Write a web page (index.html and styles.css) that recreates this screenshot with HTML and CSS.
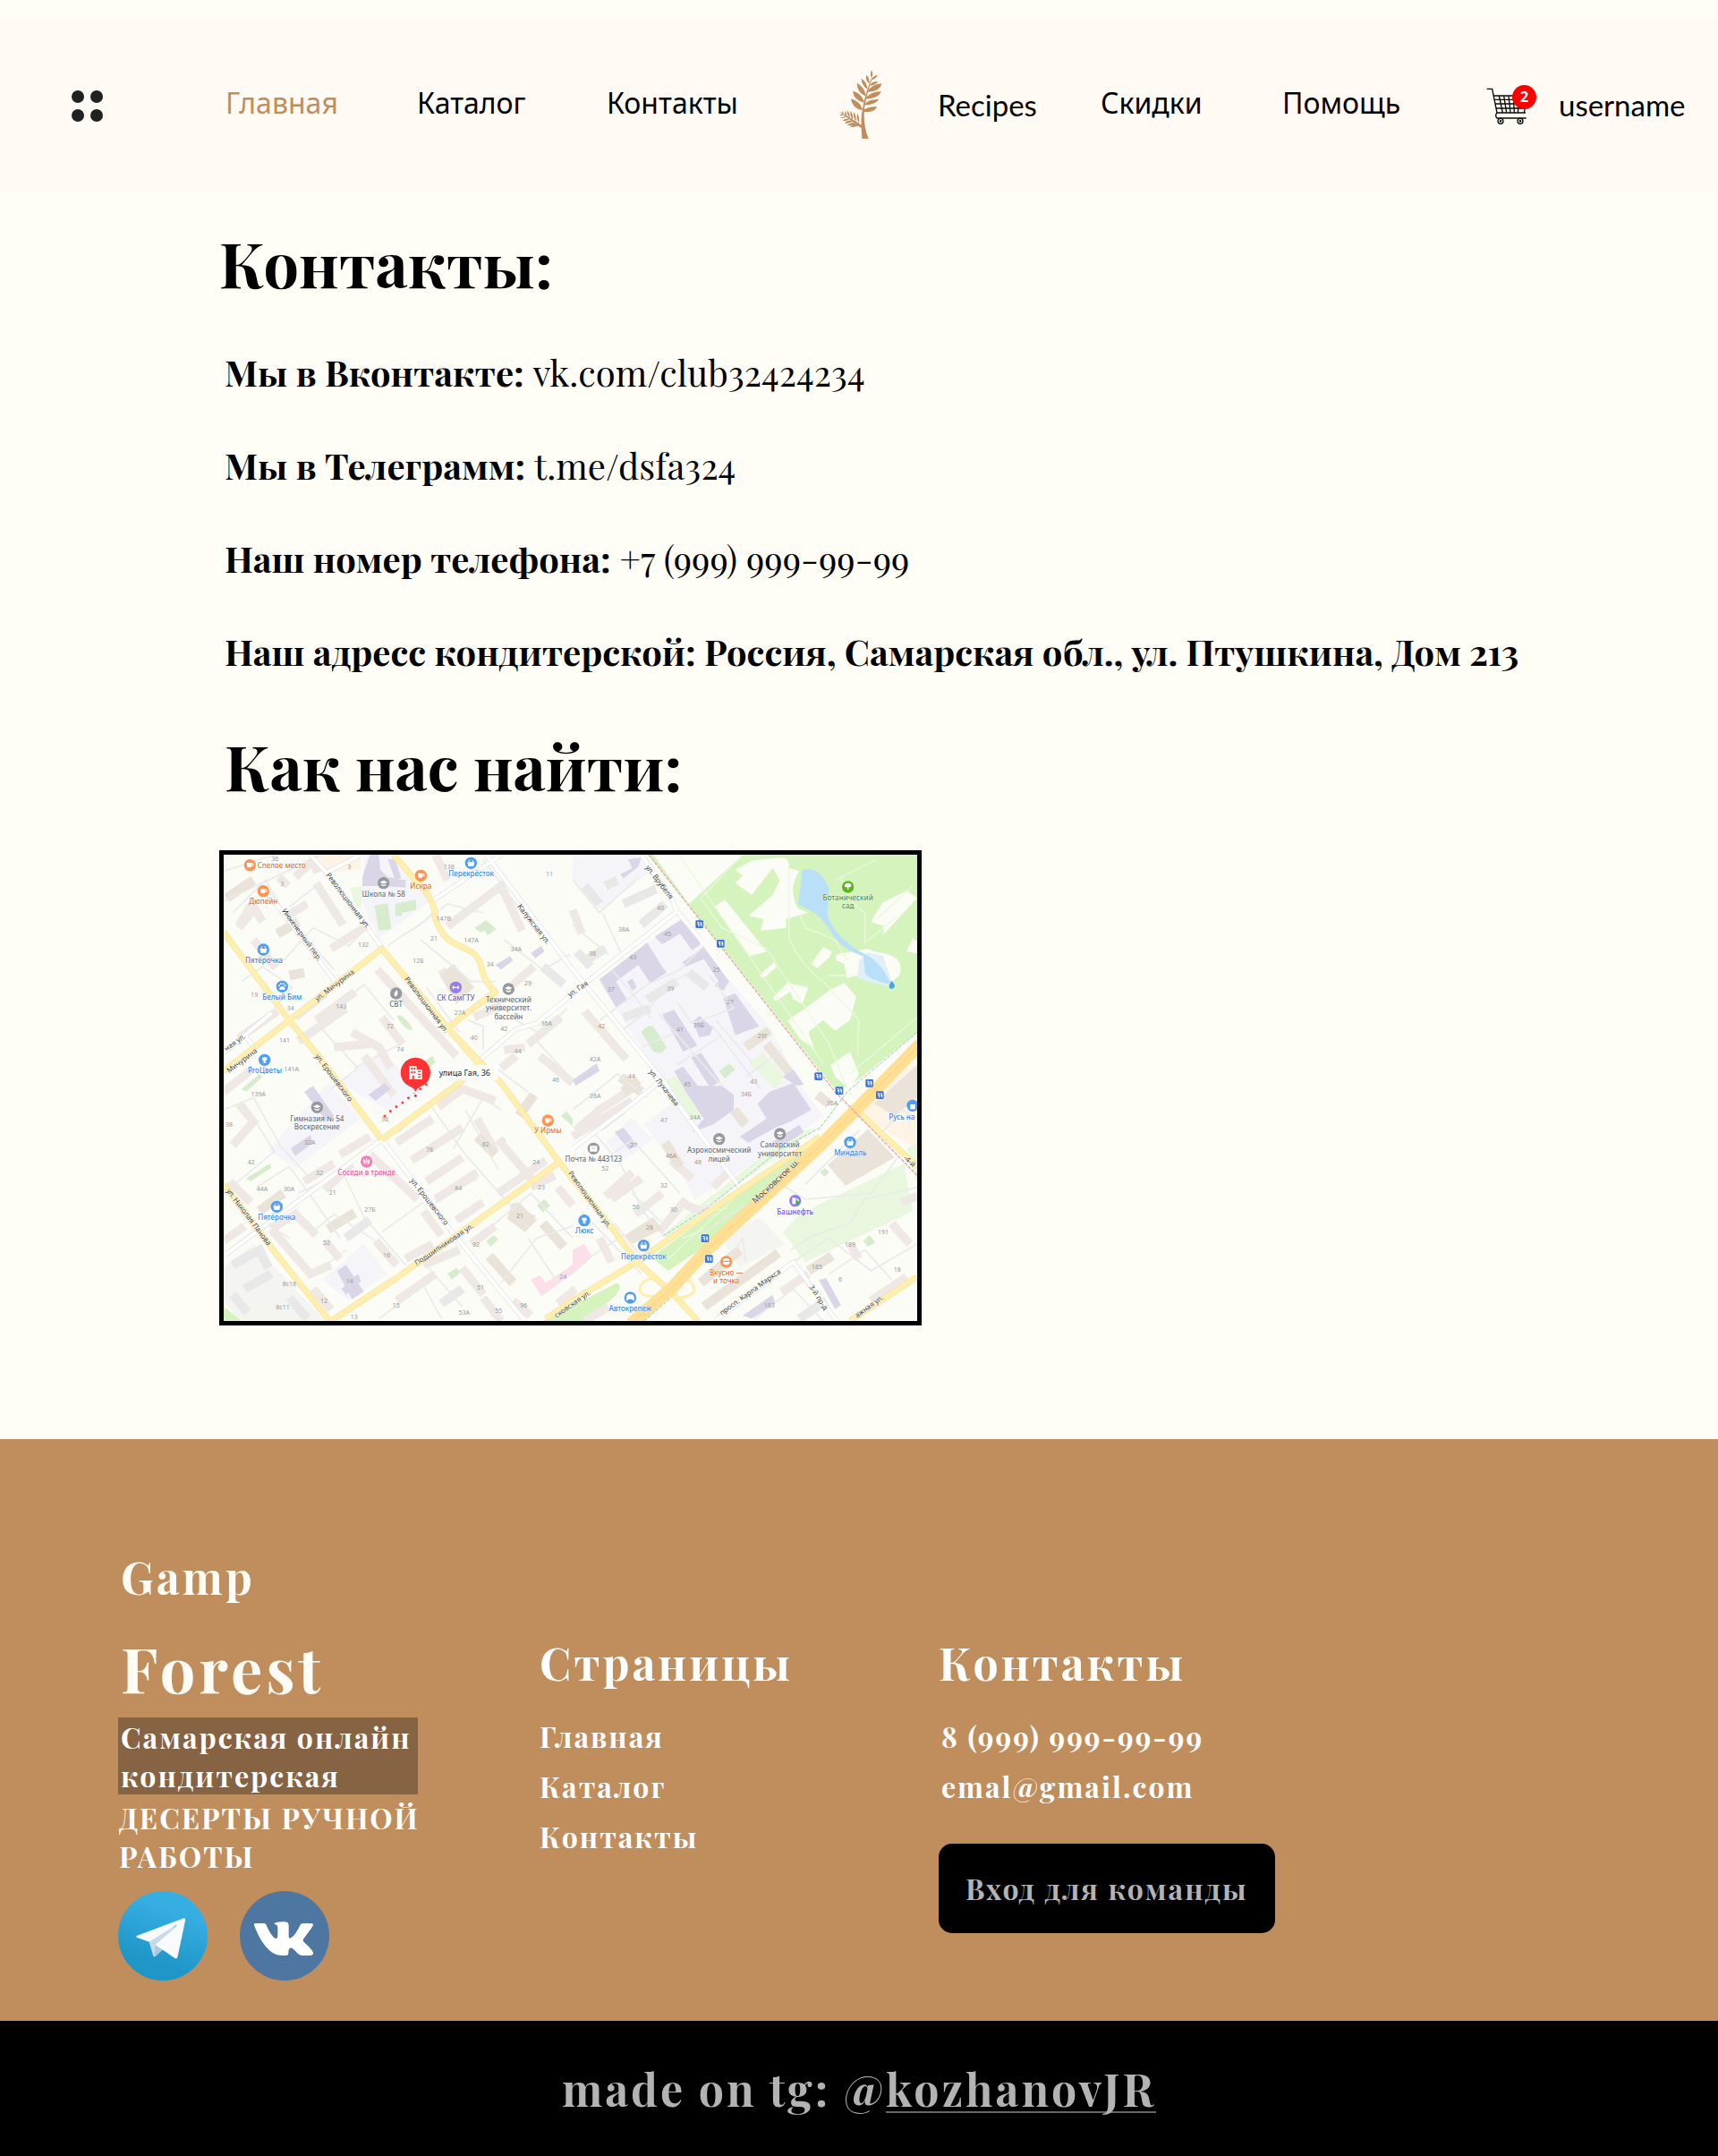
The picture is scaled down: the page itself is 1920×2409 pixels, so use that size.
FILE: index.html
```html
<!DOCTYPE html>
<html lang="ru">
<head>
<meta charset="utf-8">
<meta name="viewport" content="width=device-width, initial-scale=1">
<title>Gamp Forest — Контакты</title>
<link rel="stylesheet" href="styles.css">
</head>
<body>
<header class="header">
  <button class="menu" aria-label="Меню">
    <svg width="36" height="36" viewBox="0 0 36 36" fill="#202221"><circle cx="7" cy="7" r="7"/><circle cx="28" cy="7" r="7"/><circle cx="7" cy="28" r="7"/><circle cx="28" cy="28" r="7"/></svg>
  </button>
  <a class="link active" href="#">Главная</a>
  <a class="link" href="#">Каталог</a>
  <a class="link" href="#contacts">Контакты</a>
  <a class="logo" href="#" aria-label="Gamp Forest">
    <svg width="49" height="77" viewBox="115 54 147 231" fill="#c08d5d">
      <path d="M191 285 Q185 215 193 185 Q200 140 223 82 L225 83 Q205 140 198 190 Q196 245 213 285Z"/>
      <path d="M190 240 Q165 224 121 196 L120 199 Q160 228 189 250Z"/>
      <path d="M223 82 Q216 68 223 55 Q229 69 223 82ZM222 88 Q227 74 244 71 Q238 85 222 88ZM216 101 Q201 88 206 71 Q217 82 216 101ZM216 106 Q226 92 245 93 Q235 108 216 106ZM210 119 Q190 107 189 83 Q207 94 210 119ZM208 128 Q226 101 257 100 Q251 128 208 128ZM204 143 Q175 131 174 98 Q200 111 204 143ZM202 151 Q220 126 256 127 Q242 154 202 151ZM199 164 Q164 157 160 125 Q191 132 199 164ZM198 171 Q214 150 248 153 Q232 174 198 171ZM194 190 Q158 185 154 151 Q184 158 194 190ZM194 190 Q213 176 242 178 Q231 200 194 194Z"/>
      <path d="M181 235 Q172 216 175 199 Q184 215 181 235ZM171 228 Q160 211 164 195 Q173 209 171 228ZM160 221 Q149 208 153 191 Q162 204 160 221ZM150 215 Q139 204 142 190 Q151 201 150 215ZM139 208 Q131 199 133 191 Q141 199 139 208ZM128 201 Q123 197 124 192 Q130 196 128 201ZM184 238 Q168 232 151 245 Q171 248 184 238ZM174 233 Q156 227 141 240 Q160 244 174 233ZM162 225 Q145 220 132 232 Q148 236 162 225ZM150 218 Q137 215 125 224 Q139 228 150 218ZM139 211 Q128 209 120 215 Q130 218 139 211ZM128 204 Q121 202 116 206 Q123 210 128 204Z"/>
    </svg>
  </a>
  <a class="link latin" href="#">Recipes</a>
  <a class="link" href="#">Скидки</a>
  <a class="link" href="#">Помощь</a>
  <div class="account">
    <a class="cart" href="#" aria-label="Корзина">
      <svg width="56" height="46" viewBox="63 42 168 138" fill="none" stroke="#0b0b0b" stroke-width="4">
        <path d="M65 58H83L99 138H195M89 81H160M91 94H170M94 108H190M97 123H194M106 81L118 138M122 81L131 138M138 81L144 138M154 81L157 138M172 108L169 138M193 122L190 138M99 138Q91 147 99 156H197"/>
        <circle cx="111" cy="166" r="9"/><circle cx="177" cy="166" r="9"/><circle cx="111" cy="166" r="2"/><circle cx="177" cy="166" r="2"/>
      </svg>
      <span class="badge">2</span>
    </a>
    <a class="link latin" href="#">username</a>
  </div>
</header>

<main class="main" id="contacts">
  <h1 class="title">Контакты:</h1>
  <ul class="contacts">
    <li><b>Мы в Вконтакте:</b> vk.com/club32424234</li>
    <li><b>Мы в Телеграмм:</b> t.me/dsfa324</li>
    <li><b>Наш номер телефона:</b> +7 (999) 999-99-99</li>
    <li><b>Наш адресс кондитерской: Россия, Самарская обл., ул. Птушкина, Дом 213</b></li>
  </ul>
  <h2 class="title find">Как нас найти:</h2>
  <div class="map">
  <svg viewBox="30 45 2325 1563" role="img" aria-label="Карта: улица Гая, 36">
    <defs>
      <g id="cup"><path d="M-10-8H6V2Q6 8 0 8H-4Q-10 8-10 2Z" fill="#fff"/><path d="M6-5H11V2H6" fill="none" stroke="#fff" stroke-width="3"/></g>
      <g id="basket"><path d="M-12-3H12L9 11H-9Z" fill="#fff"/><path d="M-8-3L-4-11M8-3L4-11" stroke="#fff" stroke-width="3"/></g>
      <g id="school"><path d="M-13-3L0-9L13-3L0 3ZM-8 3L0 7L8 3V8L0 11L-8 8Z" fill="#fff"/></g>
      <g id="flower"><path d="M-8-10Q-4-5 0-11Q4-5 8-10V-2Q6 4 0 4T-8-2ZM-2 3H2V7L7 5Q5 11 0 11T-7 5L-2 7Z" fill="#fff"/></g>
      <g id="stop"><rect x="-13" y="-13" width="26" height="26" rx="4" fill="#3974df"/><path d="M-8-6H-2V8M-7 0H-2M2-5Q7-8 7-2Q7 1 2 2M7 8V-5" fill="none" stroke="#fff" stroke-width="3"/></g>
    </defs>
    <path fill="#fbfcf6" d="M30 45H2355V1608H30Z"/>
    <path fill="#f5f5f9" d="M500 50L610 45L725 200L550 325L495 205ZM1200 50L1420 45L1450 110L1290 235L1200 130ZM1290 475L1550 265L1860 620L1960 810L2040 920L1920 1010L1610 1200L1560 1110L1440 950L1540 870L1470 760L1370 600ZM180 1035L380 810L490 930L270 1095ZM420 810L560 700L690 840L590 910ZM360 1470L500 1350L580 1450L450 1540ZM1310 1010L1400 925L1470 1000L1370 1070Z"/>
    <path fill="#f4f4f1" d="M30 1430L130 1350L370 1608H80L30 1540ZM1700 1330L1830 1260L1910 1350L1760 1430Z"/>
    <path fill="#fdf4e5" d="M2150 900L2355 740V1020L2310 1010ZM340 45H490V95L380 105Z"/>
    <!-- parks -->
    <path fill="#d4f3bd" d="M1470 45L1590 210L1770 45H2355V640L2130 820L2080 832L1455 45ZM2000 1015L1740 1190L1465 1395L1520 1440L1610 1380L1840 1190ZM1100 1608L1350 1480Q1380 1500 1300 1560L1260 1608ZM30 1560L90 1608H30Z"/>
    <path fill="#e9f7de" d="M1905 1310L1960 1250L2310 1080L2340 1240L1980 1410ZM1500 1320L1930 980L2020 960L1740 1160L1520 1330ZM455 155L495 150L490 230L465 200ZM2320 1030L2355 1010V1150ZM1500 800L1550 790L1640 930L1590 920ZM1790 740L1840 710L1910 790L1880 830Z"/>
    <path fill="#d6eccd" d="M535 215L580 208L592 295L550 300ZM605 210L675 195V230L627 240V250H605ZM870 290L910 265L945 295L915 315L905 300L890 305ZM1430 640Q1460 600 1480 635L1515 690Q1500 720 1470 705ZM1690 770L1725 745L1745 765L1710 795ZM610 585Q630 575 665 630Q640 640 610 585ZM105 1130L185 1080L190 1095L120 1140ZM1080 1220L1105 1200L1125 1220L1100 1245ZM910 1340L935 1320L950 1335L925 1360ZM780 1450L810 1430L825 1445L795 1470ZM1160 920L1180 905L1200 930V955ZM2175 1340L2195 1320L2215 1345L2190 1360ZM90 830L150 780L160 790L105 840ZM700 740L730 720L740 740L710 770ZM950 1000L965 990L978 1005L960 1020ZM2030 1110L2045 1095L2060 1110L2045 1125Z"/>
    <path fill="#fbfcf6" d="M1475 45L1595 170L1765 45ZM1745 95L1800 65L1890 55Q1930 50 1925 90L1960 100Q1920 160 1955 225L1990 240L1915 260V290L1830 300L1840 260L1790 250L1870 180L1895 130L1870 90L1800 180L1745 140L1770 115ZM1675 220L1710 195L1850 370L1795 385ZM2200 270L2240 205L2320 165L2355 190L2240 315L2245 285ZM2000 410L2040 355L2070 370L2060 390L2020 425ZM2080 380L2190 360L2210 370Q2320 380 2295 450L2260 480L2150 450L2120 460L2110 410L2085 400ZM1825 450L1875 405L1885 420L1840 460ZM1870 525L1920 475L1990 490L1970 545L1940 530L1930 505L1880 535ZM1920 600L1980 560L2060 500L2110 475L2150 520L2130 600L2080 635L2040 600L1990 640L2010 695L1960 660ZM2065 750L2130 705L2160 780L2130 830L2080 790ZM2320 370L2340 325L2355 335V375Z"/>
    <path fill="#e0eff8" d="M2155 460L2160 400L2190 372L2240 385L2275 485L2230 480Z"/>
    <path fill="#b9e0f8" d="M1970 95Q2030 80 2060 160L2055 220Q2045 270 2110 330Q2150 365 2180 378Q2215 395 2240 430L2270 480Q2190 465 2180 440L2175 386Q2120 370 2080 325Q2040 260 2010 240L1955 210Q1965 160 1970 95Z"/>
    <path fill="none" stroke="#eaf9dc" stroke-width="4" d="M1770 45L1630 190L1700 290L1850 360L2060 680L2120 830M1560 50L2040 745M2100 120Q2120 200 2180 240L2180 340L2290 250M1960 240L1980 290L2080 330L2120 400M1925 90V320Q1950 400 2050 480L2160 600L2155 720M2060 450H2130M2130 780L2355 590M1520 1400L1760 1180M1570 1330L1640 1300M1660 1240L1720 1230M2080 130L2220 60M2220 260L2340 150"/>
    <!-- buildings: each stroke segment is one block -->
    <path fill="none" stroke="#efe8e5" stroke-width="28" d="M270 120L330 65L345 105M80 285L125 210L160 270M215 120L245 150M130 330L205 425M340 140L430 280M390 360L500 290M240 250L310 210M270 590L370 510M80 660L210 570M30 840L130 760M280 670L440 560M340 600L470 505M560 590L630 680M780 285L960 150L1030 300M740 45L780 130M1070 420L1000 480M760 430L800 490M460 640L550 690L590 760M400 690L520 680M500 720L600 850M545 430L810 720M970 700L1040 690M1050 680L1160 590M960 760L1010 720M1090 720L1200 810M130 230L80 290M60 1020L130 940L80 880M420 1050L520 990M300 1140L400 1080M610 1010L730 930M750 890L830 830L940 870M660 1070L830 960M710 1140L830 1060M740 1200L880 1110M520 1050L680 1200M460 1080L370 1170M50 1140L120 1210M190 1300L270 1250L340 1320M190 1300L320 1450L390 1420M700 1240L760 1320M640 1400L730 1350M540 1340L610 1420M700 1420L820 1370M610 1540L740 1450M330 1500L390 1570M30 1340L100 1290M370 1340L420 1400M810 1270L900 1210M830 1430L900 1520M900 1530L960 1608M950 1180L1110 1070M950 1000L1060 1130M1060 1160L1140 1120M860 1350L940 1290M1150 1160L1200 1220M880 930L940 1040M1240 570L1380 730M1210 970L1290 900L1400 830M1200 990L1400 870M1290 960L1370 900M1310 1190L1400 1110M1330 1200L1430 1130M1410 1250L1500 1180M1490 1310L1580 1200M1290 1330L1330 1410M1670 1160L1720 1110M1530 1070L1600 1130M1660 1250L1580 1220M1200 230L1230 310M1210 1500L1150 1550M1900 1510L1990 1450M2270 1280L2330 1350M2130 1350L2160 1400M2200 1540L2320 1460M2300 1210L2355 1190M870 590L960 550M1000 1540L1060 1590M1240 1608L1320 1560"/>
    <path fill="none" stroke="#eae3da" stroke-width="32" d="M1360 790L1430 840M1370 840L1420 800M1780 690L1860 635M1850 680L1930 780M1640 1560L1890 1380M1630 1480L1760 1370M1000 1240L1070 1270M1100 1280L1170 1360M920 1390L1000 1480M1990 1440L2070 1390M1740 900L1780 950M2020 850L2060 880M40 190L130 130M210 310L280 270M250 450L300 440M1020 920L1070 850M880 990L940 1050M380 1300L470 1245M150 1240L230 1180M1510 1010L1560 1090"/>
    <path fill="#eae3da" d="M755 450L800 410L870 490L810 545ZM2055 1085L2190 965L2280 1060L2115 1155ZM1375 1320L1470 1260L1500 1300L1400 1350ZM2210 880L2355 750V860L2280 920ZM995 1215L1020 1210L1080 1270L1040 1310L980 1265Z"/>
    <path fill="#dad6e8" d="M495 120L520 45H550L555 95L580 120L640 130L640 155L560 150L495 150ZM580 60L605 60L625 125L605 130ZM1360 110L1400 90L1385 60L1430 55L1420 85L1370 125ZM1290 463L1450 340L1500 420L1515 440L1460 475L1420 415L1345 470L1385 535L1345 555ZM1475 320L1565 262L1630 345L1600 365L1560 310L1500 345ZM1568 405L1640 355L1725 470L1705 500L1675 485L1690 470L1640 395L1580 420ZM1382 470L1400 460L1415 490L1400 500ZM1500 580L1540 565L1618 685L1570 705ZM1602 605L1625 585L1670 625L1660 650L1625 658ZM1705 525L1745 510L1825 620L1745 650ZM1597 725L1630 708L1695 805L1660 825ZM1540 770L1570 755L1620 820L1700 820L1740 850L1740 900L1670 950L1600 975L1640 930L1580 840ZM1760 990L1850 930L1820 880L1860 840L1940 810L2000 900L1930 940L1880 960L1790 1010ZM1865 1010L1960 950L1975 975L1890 1030ZM1340 975L1370 960L1415 1015L1390 1035ZM300 840L330 820L400 920L375 940ZM255 1030L320 985L330 1010L270 1055ZM515 850L570 810L590 830L540 870ZM410 1440L440 1420L500 1510L460 1535ZM425 1500L480 1450L490 1475L440 1520ZM940 415L990 385L1000 400L960 430ZM1060 375L1095 350L1105 370L1075 392ZM1200 800L1280 745L1290 770L1210 820ZM2025 1470L2050 1465L2100 1555L2080 1568ZM1770 1590L1870 1520L1880 1550L1800 1600ZM1905 790L1940 765L1975 815L1950 820Z"/>
    <path fill="none" stroke="#e8e8e9" stroke-width="30" d="M1215 370L1260 420M1240 400L1310 360M1370 210L1480 160M1430 280L1510 210M1240 150L1290 210M1310 150L1350 130M1450 530L1550 470M1370 590L1460 560M1590 440L1650 490M60 1420L150 1370L180 1430M60 1520L110 1580M100 1500L190 1450M250 1530L310 1600M1100 420L1170 480M1960 1600L2050 1540M760 1550L830 1500M440 1330L520 1270"/>
    <path fill="#fddfe9" d="M1060 1470L1090 1455L1110 1480L1200 1420V1370L1240 1350L1265 1395L1200 1450L1095 1525Z"/>
    <!-- yards -->
    <path fill="none" stroke="#e9eae9" stroke-width="5" d="M60 240L170 130L240 250L400 430M250 220L340 150L430 270M30 100L200 45M30 200L350 50M230 400L330 290L450 350L520 280M90 470L160 420L260 490L200 560M300 650L500 480L600 600M350 620L480 760L390 830M470 760L620 680M660 300L780 210L900 240M580 350L700 270L740 230M690 330L860 470H940M710 490L820 640M740 200L900 80M900 60L1090 320M970 330L1100 430L1190 380M1010 600L1100 650L1180 560M900 700V620L850 600M930 750L1050 840M1080 670L1190 790M30 900L130 860L220 1020L320 1130M100 880L200 1040L30 1180M140 1160L250 1090L330 1200L420 1330M280 1180L430 1110L500 1260L640 1420M560 1310L700 1210M250 1330L200 1300M340 1300L400 1250L540 1340M320 1460L440 1370M610 980L720 880L840 1050L1000 1230M740 1210L880 1130M800 1030L900 860L960 900M840 900L950 1100M880 1330L1060 1180L1200 1330M960 1480L1080 1330L1200 1290M700 1410L830 1560M1050 1330L1150 1480M550 1600L700 1490L760 1600"/>
    <path fill="none" stroke="#e9eae9" stroke-width="5" d="M1200 130L1290 240L1420 120M1300 240L1360 370M1200 280L1320 380M1290 600L1450 480L1560 430L1640 350M1370 630L1450 570L1520 480L1590 440M1490 580L1700 820M1550 540L1600 610L1740 560L1660 450M1430 690L1550 640M1550 750L1700 650M1670 620L1830 830M1680 600L1800 740M1780 790L1900 700M1330 430L1400 510L1460 590M1200 900L1350 780L1450 860M1240 940L1360 1080L1440 1250M1290 1080L1400 1000L1560 1180M1400 1180L1520 1300M1340 1280L1420 1380M1250 1400L1370 1320M1480 1300L1430 1230M1620 1330L1710 1260L1830 1190M1900 1150L1980 1200L2200 1180L2290 1060M1930 1370L2010 1320L2130 1280L2180 1200L2355 1160M1980 1150L2070 1060L2160 970M1940 1410L2060 1330L2200 1440L2355 1350M1980 1480L2080 1600M2060 1450L2180 1370L2270 1470M1700 1440L1770 1330L1780 1410M1810 1600L1940 1500L2040 1608M1230 1240L1430 1450M2220 1000L2300 900L2355 930"/>
    <!-- roads: casing, then fill -->
    <g fill="none" stroke-linejoin="round">
      <path stroke="#e4e5e4" stroke-width="17" d="M320 45L375 105L560 355M375 105L490 45M175 170L400 465M910 45L1200 430L1510 810L1560 890L1760 1160M880 740L1010 630L1080 610L1250 470L1550 235L1630 330M1430 45L1530 190L1550 235M560 1000L780 1290L1040 1608M30 1390L560 1000M1200 1030L1400 880L1500 800M1680 1605L1940 1410L2085 1608M30 710L190 575M100 650L140 700M730 200L960 45"/>
      <path stroke="#fff" stroke-width="12" d="M320 45L375 105L560 355M375 105L490 45M175 170L400 465M910 45L1200 430L1510 810L1560 890L1760 1160M880 740L1010 630L1080 610L1250 470L1550 235L1630 330M1430 45L1530 190L1550 235M560 1000L780 1290L1040 1608M30 1390L560 1000M1200 1030L1400 880L1500 800M1680 1605L1940 1410L2085 1608M30 710L190 575M100 650L140 700M730 200L960 45"/>
      <path stroke="#f6e3a5" stroke-width="21" d="M30 305L250 600L340 710L560 1000M30 770L250 600L560 360L780 625L890 740L960 810L1155 1075L1335 1300L1415 1410L1530 1510L1620 1608M600 45L715 180Q740 220 740 260Q760 320 800 340L860 370Q890 390 895 430Q910 480 940 505L780 625L880 740M890 740L820 810L560 1000M1155 1075L870 1280L600 1470L390 1608M30 1150L200 1375L385 1608M2030 990L1740 1185L1500 1350L1415 1410L1200 1540L1110 1600M2150 900L2355 1090M2130 1608L2355 1460"/>
      <path stroke="#feefae" stroke-width="17" d="M30 305L250 600L340 710L560 1000M30 770L250 600L560 360L780 625L890 740L960 810L1155 1075L1335 1300L1415 1410L1530 1510L1620 1608M600 45L715 180Q740 220 740 260Q760 320 800 340L860 370Q890 390 895 430Q910 480 940 505L780 625L880 740M890 740L820 810L560 1000M1155 1075L870 1280L600 1470L390 1608M30 1150L200 1375L385 1608M2030 990L1740 1185L1500 1350L1415 1410L1200 1540L1110 1600M2150 900L2355 1090M2130 1608L2355 1460"/>
      <path stroke="#feefae" stroke-width="9" d="M1490 1465Q1430 1465 1425 1500Q1425 1530 1490 1525M1550 1475Q1600 1460 1608 1500Q1605 1530 1545 1530"/>
      <path stroke="#ffdf94" stroke-width="42" d="M2365 680L2150 900L2030 1020L1650 1370L1530 1500L1395 1618"/>
      <path stroke="#fad283" stroke-width="3" d="M2365 680L2150 900L2030 1020L1650 1370L1530 1500L1395 1618"/>
      <path stroke="#e9a5a5" stroke-width="4" stroke-dasharray="12 4" d="M1455 45L2080 840L2355 1120"/>
      <path stroke="#8fd0b4" stroke-width="3" stroke-dasharray="12 5" d="M2355 640L2120 840L2030 960L1900 1030L1650 1230L1500 1325M1440 1608L1525 1535"/>
    </g>
    <g class="num">
      <text x="202" y="65">36</text><text x="226" y="150">3</text><text x="451" y="94">3</text><text x="785" y="94">138</text><text x="1122" y="118">11</text><text x="767" y="267">147В</text><text x="735" y="334">21</text><text x="860" y="340">147А</text><text x="498" y="355">132</text><text x="682" y="409">12Б</text><text x="1010" y="369">34А</text><text x="923" y="420">34</text><text x="1050" y="484">29</text><text x="133" y="521">19</text><text x="254" y="567">34</text><text x="424" y="561">143</text><text x="822" y="581">27А</text><text x="588" y="627">72</text><text x="970" y="636">42</text><text x="1112" y="618">36А</text><text x="869" y="665">40</text><text x="234" y="676">141</text><text x="622" y="704">74</text><text x="1016" y="712">44</text><text x="257" y="772">141А</text><text x="1143" y="808">46</text>
      <text x="1495" y="232">40</text><text x="1371" y="304">38А</text><text x="1519" y="318">45</text><text x="1266" y="383">38</text><text x="1402" y="396">43</text><text x="1682" y="438">25</text><text x="1528" y="502">39</text><text x="1328" y="505">37</text><text x="1728" y="545">27</text><text x="1297" y="627">42</text><text x="1560" y="639">41</text><text x="1623" y="625">39Б</text><text x="1837" y="661">29Г</text><text x="1275" y="739">42А</text><text x="1397" y="796">44</text><text x="1584" y="822">45</text><text x="1807" y="812">43</text>
      <text x="146" y="856">139А</text><text x="48" y="957">38</text><text x="319" y="1017">32А</text><text x="571" y="938">36</text><text x="122" y="1083">42</text><text x="351" y="1118">32</text><text x="159" y="1173">44А</text><text x="249" y="1173">30А</text><text x="395" y="1186">21</text><text x="520" y="1241">27Б</text><text x="720" y="1040">78</text><text x="908" y="1024">82</text><text x="1078" y="1083">24</text><text x="1095" y="1167">23</text><text x="817" y="1170">84</text><text x="1023" y="1264">21</text><text x="375" y="1352">52</text><text x="577" y="1395">16</text><text x="876" y="1359">92</text><text x="452" y="1482">14</text><text x="250" y="1492">8с18</text><text x="228" y="1568">8с11</text><text x="367" y="1548">12</text><text x="608" y="1564">15</text><text x="836" y="1587">53А</text><text x="891" y="1503">51</text><text x="952" y="1582">55</text><text x="1036" y="1563">96</text><text x="1168" y="1467">24</text><text x="467" y="1602">13</text>
      <text x="1276" y="860">26А</text><text x="1506" y="941">47</text><text x="1610" y="932">34А</text><text x="1782" y="854">34Б</text><text x="2070" y="886">36А</text><text x="1405" y="1026">27</text><text x="1530" y="1061">46А</text><text x="1620" y="1083">48</text><text x="1309" y="1104">52</text><text x="1506" y="1162">32</text><text x="1412" y="1232">56</text><text x="1538" y="1243">30</text><text x="1458" y="1301">28</text><text x="2241" y="1316">191</text><text x="2130" y="1359">189</text><text x="2019" y="1435">185</text><text x="2097" y="1477">6</text><text x="2288" y="1442">18</text><text x="1859" y="1563">183</text>
    </g>
    <g class="street">
      <text transform="translate(372 113) rotate(53)">Революционная ул.</text>
      <text transform="translate(224 233) rotate(54)">Инженерный пер.</text>
      <text transform="translate(1014 219) rotate(52)">Калужская ул.</text>
      <text transform="translate(343 537) rotate(-37)">ул. Мичурина</text>
      <text transform="translate(635 462) rotate(53)">Революционная ул.</text>
      <text transform="translate(48 778) rotate(-37)">Мичурина</text>
      <text transform="translate(40 704) rotate(-36)">ная ул.</text>
      <text transform="translate(335 721) rotate(53)">ул. Ерошевского</text>
      <text transform="translate(1444 88) rotate(53)">ул. Врубеля</text>
      <text transform="translate(1190 523) rotate(-34)">ул. Гая</text>
      <text transform="translate(1455 773) rotate(52)">ул. Лукачева</text>
      <text transform="translate(38 1172) rotate(53)">ул. Николая Панова</text>
      <text transform="translate(655 1138) rotate(52)">ул. Ерошевского</text>
      <text transform="translate(677 1423) rotate(-34)">Подшипниковая ул.</text>
      <text transform="translate(1184 1113) rotate(54)">Революционная ул.</text>
      <text transform="translate(1146 1598) rotate(-35)">сковская ул.</text>
      <text class="wide" transform="translate(1813 1215) rotate(-43)">Московское ш.</text>
      <text transform="translate(1700 1590) rotate(-36)">просп. Карла Маркса</text>
      <text transform="translate(1992 1494) rotate(57)">3-й пр-д</text>
      <text transform="translate(2154 1598) rotate(-36)">ажная ул.</text>
      <text transform="translate(2308 1063) rotate(43)">-4-й</text>
    </g>
    <g fill="#ff9352"><circle cx="118" cy="80" r="20"/><circle cx="163" cy="167" r="20"/><circle cx="691" cy="115" r="20"/><circle cx="1117" cy="936" r="20"/><circle cx="1715" cy="1410" r="20"/></g>
    <g fill="#519df0"><circle cx="859" cy="73" r="20"/><circle cx="163" cy="363" r="20"/><circle cx="226" cy="487" r="20"/><circle cx="167" cy="733" r="20"/><circle cx="208" cy="1225" r="20"/><circle cx="1239" cy="1271" r="20"/><circle cx="1438" cy="1355" r="20"/><circle cx="1393" cy="1530" r="20"/><circle cx="2130" cy="1009" r="20"/><circle cx="2340" cy="886" r="20"/></g>
    <g fill="#96999d"><circle cx="566" cy="140" r="20"/><circle cx="608" cy="510" r="20"/><circle cx="985" cy="495" r="20"/><circle cx="343" cy="892" r="20"/><circle cx="1270" cy="1030" r="20"/><circle cx="1691" cy="998" r="20"/><circle cx="1895" cy="981" r="20"/></g>
    <g fill="#937bf2"><circle cx="808" cy="490" r="20"/><circle cx="1946" cy="1205" r="20"/></g>
    <circle cx="509" cy="1074" r="20" fill="#f281b3"/><circle cx="2123" cy="153" r="20" fill="#60b41e"/>
    <use href="#cup" x="118" y="80"/><use href="#cup" x="163" y="167"/><use href="#cup" x="691" y="115"/><use href="#cup" x="1117" y="936"/>
    <use href="#basket" x="859" y="73"/><use href="#basket" x="163" y="363"/><use href="#basket" x="208" y="1225"/><use href="#basket" x="1438" y="1355"/><use href="#basket" x="2130" y="1009"/>
    <use href="#school" x="566" y="140"/><use href="#school" x="985" y="495"/><use href="#school" x="343" y="892"/><use href="#school" x="1691" y="998"/><use href="#school" x="1895" y="981"/>
    <use href="#flower" x="167" y="733"/><use href="#flower" x="1239" y="1271"/>
    <g fill="#fff">
      <path d="M216 494Q218 486 226 486T236 494Q236 500 226 497Q216 500 216 494Z"/><circle cx="216" cy="484" r="3"/><circle cx="222" cy="478" r="3"/><circle cx="230" cy="478" r="3"/><circle cx="236" cy="484" r="3"/>
      <path d="M1258 1021H1282V1040H1258ZM1380 1527L1385 1519H1401L1406 1527V1539H1401V1535H1385V1539H1380ZM2332 882H2348V898H2332ZM1704 1402Q1715 1394 1726 1402V1406H1704ZM1704 1410H1726V1416Q1715 1424 1704 1416ZM1936 1195H1948V1216H1936ZM2121 162V154Q2110 154 2112 147Q2115 139 2123 140Q2132 139 2134 147Q2135 154 2125 154V162ZM499 1064Q505 1066 505 1083Q497 1080 499 1064ZM519 1064Q513 1066 513 1083Q521 1080 519 1064ZM509 1061Q515 1070 509 1084Q503 1070 509 1061ZM604 520Q598 510 610 498Q616 505 612 515Q608 522 604 520Z"/>
    </g>
    <path d="M1264 1026L1270 1031L1276 1026" stroke="#96999d" stroke-width="2" fill="none"/>
    <path d="M796 490H820M800 484V496M816 484V496M1951 1198L1956 1203V1212" stroke="#fff" stroke-width="4" fill="none"/>
    <circle cx="1954" cy="1212" r="6" fill="#31bf31"/>
    <path d="M2270 468Q2285 484 2277 491T2263 491Q2257 484 2270 468Z" fill="#49a3e6"/>
    <use href="#stop" x="1625" y="278"/><use href="#stop" x="1696" y="343"/><use href="#stop" x="2024" y="788"/><use href="#stop" x="2195" y="811"/><use href="#stop" x="2094" y="836"/><use href="#stop" x="2230" y="851"/><use href="#stop" x="1644" y="1331"/><use href="#stop" x="1657" y="1400"/>
    <g class="poi orange"><text class="start" x="143" y="90">Спелое место</text><text x="163" y="211">Дюпейн</text><text x="691" y="159">Искра</text><text x="1117" y="979">У Ирмы</text><text x="1715" y="1454">Вкусно —</text><text x="1715" y="1482">и точка</text></g>
    <g class="poi blue"><text x="860" y="118">Перекрёсток</text><text x="165" y="408">Пятёрочка</text><text x="226" y="531">Белый Бим</text><text x="168" y="776">ProЦветы</text><text x="208" y="1269">Пятёрочка</text><text x="1240" y="1314">Люкс</text><text x="1438" y="1400">Перекрёсток</text><text x="1393" y="1575">Автокрепеж</text><text x="2131" y="1054">Миндаль</text><text class="start" x="2260" y="932">Русь на</text></g>
    <g class="poi grey"><text x="566" y="185">Школа № 58</text><text x="608" y="554">СВТ</text><text x="985" y="540">Технический</text><text x="985" y="568">университет.</text><text x="985" y="596">бассейн</text><text x="343" y="939">Гимназия № 54</text><text x="343" y="967">Воскресение</text><text x="1270" y="1074">Почта № 443123</text><text x="1691" y="1045">Аэрокосмический</text><text x="1691" y="1073">лицей</text><text x="1895" y="1027">Самарский</text><text x="1895" y="1055">университет</text></g>
    <g class="poi violet"><text x="808" y="534">СК СамГТУ</text><text x="1946" y="1251">Башнефть</text></g>
    <g class="poi pink"><text x="509" y="1118">Соседи в тренде</text></g>
    <g class="poi green"><text x="2123" y="198">Ботанический</text><text x="2123" y="226">сад</text></g>
    <!-- selected address -->
    <path d="M570 921L591 903L611 888L631 875L650 860L673 845L697 823L726 804" fill="none" stroke="#ff3b3b" stroke-width="9" stroke-linecap="round" stroke-dasharray="0 25"/>
    <circle cx="673" cy="853" r="7" fill="#ff3333" stroke="#fff" stroke-width="4"/>
    <path d="M673 840Q670 828 655 822A50 50 0 1 1 691 822Q676 828 673 840Z" fill="#ff3333"/>
    <path d="M652 753H677V765H695V798H652ZM658 759V765H664V759ZM667 759V765H673V759ZM658 771V777H664V771ZM667 771V777H673V771ZM662 785V798H668V785ZM681 770V774H691V770ZM681 779V783H691V779ZM681 788V792H691V788Z" fill="#fff" fill-rule="evenodd"/>
    <rect x="742" y="750" width="208" height="52" rx="8" fill="#fff" opacity=".8"/>
    <text class="place" x="752" y="785">улица Гая, 36</text>
  </svg>
  </div>
</main>

<footer class="footer">
  <div class="columns">
    <section class="brand">
      <p class="gamp">Gamp</p>
      <p class="forest">Forest</p>
      <p class="tag">Самарская онлайн<br>кондитерская</p>
      <p class="handmade">ДЕСЕРТЫ РУЧНОЙ<br>РАБОТЫ</p>
      <div class="social">
        <a href="#" aria-label="Telegram"><svg width="100" height="100" viewBox="0 0 300 300">
          <defs><linearGradient id="tg" x1=".6" y1=".2" x2=".4" y2=".8"><stop offset="0" stop-color="#37aee2"/><stop offset="1" stop-color="#1e96c8"/></linearGradient></defs>
          <circle cx="150" cy="150" r="150" fill="url(#tg)"/>
          <path fill="#c8daea" d="M104 170L118 218Q121 222 128 216L150 195L196 116L150 130Z"/>
          <path fill="#a9c9dd" d="M125 180L121 219Q124 220 128 216L150 196Z"/>
          <path fill="#f8fafd" d="M125 180L190 225Q197 230 200 218L225 99Q227 88 216 92L64 149Q57 153 64 156L104 170L190 116Q199 112 195 119Z"/>
        </svg></a>
        <a href="#" aria-label="ВКонтакте"><svg width="100" height="100" viewBox="0 0 300 300">
          <circle cx="150" cy="150" r="150" fill="#4d76a1"/>
          <path fill="#fff" d="M145 216H155C163 215 163 211 163 207C163 190 171 187 180 195C190 204 198 216 210 216H235C247 215 249 208 243 200C236 190 225 181 216 172C211 167 211 164 215 158C225 144 237 130 245 116C247 110 245 108 238 108H212C206 108 204 111 201 117C194 131 185 146 176 154C168 161 164 158 164 150V117C164 106 160 104 150 103C134 102 119 104 115 109C113 112 127 109 127 123V146C127 162 120 163 110 151C102 141 96 129 90 116C88 111 86 108 80 108H54C48 108 46 112 49 117C61 148 80 185 106 204C119 213 132 216 145 216Z"/>
        </svg></a>
      </div>
    </section>
    <nav class="col">
      <h3>Страницы</h3>
      <ul><li><a href="#">Главная</a></li><li><a href="#">Каталог</a></li><li><a href="#contacts">Контакты</a></li></ul>
    </nav>
    <section class="col">
      <h3>Контакты</h3>
      <ul class="reach"><li><a href="tel:89999999999">8 (999) 999-99-99</a></li><li><a href="mailto:emal@gmail.com">emal@gmail.com</a></li></ul>
      <button class="team">Вход для команды</button>
    </section>
  </div>
  <p class="made">made on tg: @<a href="#">kozhanovJR</a></p>
</footer>
</body>
</html>
```
FILE: styles.css
```css
* { box-sizing: border-box; }
body {
  margin: 0;
  background: #fffdf6;
  color: #000;
  font-family: "Playfair Display", "Liberation Serif", serif;
}
h1, h2, h3, p, ul { margin: 0; padding: 0; }
ul { list-style: none; }
a { color: inherit; text-decoration: none; }
button { border: 0; padding: 0; background: none; font: inherit; cursor: pointer; }
svg { display: block; }

.header {
  display: grid;
  grid-template-columns: 252fr 214fr 212fr 260fr 110fr 182fr 203fr 228fr 259fr;
  align-items: center;
  justify-items: start;
  margin-top: 22px;
  padding: 56px 0 60px;
  background: #fffaf4;
}
.menu { margin-left: 80px; padding-top: 4px; }
.link {
  padding-bottom: 4px;
  font: 32px/44px "Noto Sans", sans-serif;
}
.latin { padding-bottom: 0; font-family: "Lato", sans-serif; font-size: 33px; }
.active { color: #c08d5d; }
.account {
  display: flex;
  align-items: center;
  gap: 25px;
}
.cart { position: relative; }
.badge {
  position: absolute;
  top: 1px;
  right: 0;
  width: 27px;
  border-radius: 50%;
  background: #f00;
  color: #fff;
  font: bold 16px/27px "Open Sans", sans-serif;
  text-align: center;
}

.main { padding: 30px 120px 127px 245px; }
.title { font-size: 70px; line-height: 96px; }
.contacts {
  margin: 23px 0 27px 6px;
  font-size: 40px;
  line-height: 104px;
}
.find { margin: 0 0 47px 6px; }
.map {
  width: 785px;
  max-width: 100%;
  border: 5px solid #000;
}
.map text { font-family: "Noto Sans", sans-serif; }
.num text { font-size: 21px; fill: #999; text-anchor: middle; }
.street text { font-size: 24px; fill: #444; stroke: #fff; stroke-width: 2px; paint-order: stroke; }
.street .wide { font-size: 28px; }
.poi text { font-size: 24px; font-weight: 500; text-anchor: middle; stroke: #fff; stroke-width: 2px; paint-order: stroke; }
.poi .start { text-anchor: start; }
.orange { fill: #dd7636; }
.blue { fill: #4088dc; }
.grey { fill: #707379; }
.violet { fill: #7656e4; }
.pink { fill: #e5609c; }
.green { fill: #4f923d; }
.place { font-size: 27px; fill: #222; }

.footer { background: #c08d5d; color: #fff; font-weight: bold; letter-spacing: 2px; }
.columns {
  display: grid;
  grid-template-columns: 471fr 446fr 871fr;
  padding: 119px 0 45px 132px;
}
.gamp, .forest { padding-left: 3px; color: #fffcf5; }
.gamp { font-size: 50px; line-height: 70px; letter-spacing: 3px; }
.forest { margin: 17px 0 7px; font-size: 70px; line-height: 98px; letter-spacing: 4px; }
.tag, .handmade { width: 335px; font-size: 32px; line-height: 43px; white-space: nowrap; }
.tag { padding-left: 3px; background: #866342; }
.handmade { margin: 4px 0 18px; padding-left: 1px; }
.social { display: flex; gap: 36px; }
.col { padding-top: 96px; font-size: 32px; line-height: 56px; }
.col h3 { margin-bottom: 19px; font-size: 50px; line-height: 70px; letter-spacing: 3px; }
.reach { padding-left: 3px; }
.team {
  height: 100px;
  margin-top: 36px;
  padding: 0 30px;
  border-radius: 15px;
  background: #000;
  color: #b3b3b3;
  letter-spacing: 2px;
}
.made {
  padding: 38px 0;
  background: #000;
  color: #b3b3b3;
  font-size: 50px;
  line-height: 75px;
  letter-spacing: 3px;
  text-align: center;
}
.made a {
  text-decoration: underline;
  text-decoration-color: #666;
  text-decoration-thickness: 2px;
  text-underline-offset: 5px;
  text-decoration-skip-ink: none;
}
```
